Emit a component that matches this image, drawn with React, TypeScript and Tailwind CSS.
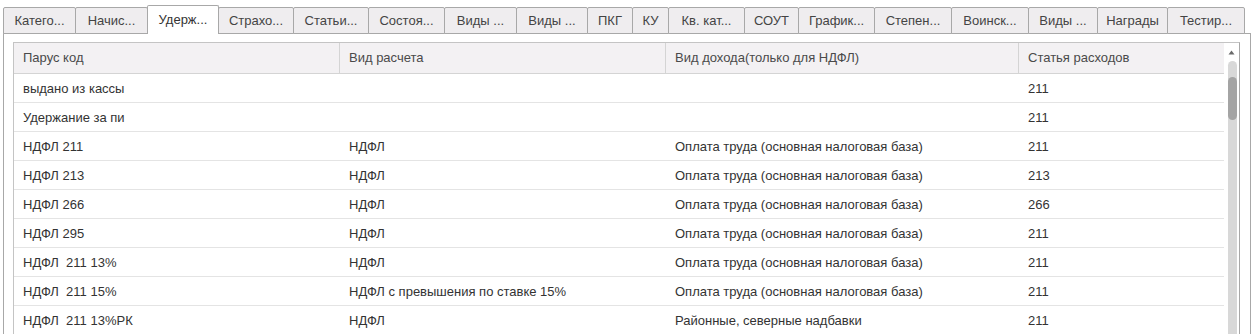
import React from "react";

const tabs: { label: string; w: number; active?: boolean }[] = [
  { label: "Катего...", w: 72 },
  { label: "Начис...", w: 72 },
  { label: "Удерж...", w: 71, active: true },
  { label: "Страхо...", w: 75 },
  { label: "Статьи...", w: 75 },
  { label: "Состоя...", w: 76 },
  { label: "Виды ...", w: 72 },
  { label: "Виды ...", w: 71 },
  { label: "ПКГ", w: 45 },
  { label: "КУ", w: 36 },
  { label: "Кв. кат...", w: 76 },
  { label: "СОУТ", w: 54 },
  { label: "График...", w: 76 },
  { label: "Степен...", w: 77 },
  { label: "Воинск...", w: 77 },
  { label: "Виды ...", w: 69 },
  { label: "Награды", w: 70 },
  { label: "Тестир...", w: 77 },
];

const OT = "Оплата труда (основная налоговая база)";
const rows: [string, string, string, string][] = [
  ["выдано из кассы", "", "", "211"],
  ["Удержание за пи", "", "", "211"],
  ["НДФЛ 211", "НДФЛ", OT, "211"],
  ["НДФЛ 213", "НДФЛ", OT, "213"],
  ["НДФЛ 266", "НДФЛ", OT, "266"],
  ["НДФЛ 295", "НДФЛ", OT, "211"],
  ["НДФЛ  211 13%", "НДФЛ", OT, "211"],
  ["НДФЛ  211 15%", "НДФЛ с превышения по ставке 15%", OT, "211"],
  ["НДФЛ  211 13%РК", "НДФЛ", "Районные, северные надбавки", "211"],
];

const colW = ["w-[326px]", "w-[326px]", "w-[353px]", "w-[205px]"];

export default function App() {
  return (
    <div className="w-[1255px] h-[334px] overflow-hidden bg-white font-['Liberation_Sans',Arial,sans-serif] text-[13px] text-[#333333]">
      <div className="flex items-end pl-[3px] h-[34px] relative z-10">
        {tabs.map((t, i) =>
          t.active ? (
            <div
              key={i}
              style={{ width: t.w + 1 }}
              className="h-[29px] -mr-px flex items-center justify-center bg-white border border-b-0 border-[#a8a8a8] rounded-t-[2px] text-[#333] pb-[1px] relative z-10"
            >
              {t.label}
            </div>
          ) : (
            <div
              key={i}
              style={{ width: t.w + 1 }}
              className="h-[27px] -mr-px flex items-center justify-center bg-[#efedef] border border-[#a8a8a8] rounded-t-[2px] text-[#444]"
            >
              {t.label}
            </div>
          )
        )}
      </div>
      <div className="ml-[3px] w-[1248px] h-[310px] -mt-px border border-[#a8a8a8] pl-[9px] pt-[8px] pr-[10px]">
        <div className="flex h-[300px] border border-[#c4c4c4] border-r-[#a8a8a8]">
          <div className="flex flex-col w-[1210px]">
            <div className="flex h-[31px] bg-[#f3f1f3] border-b border-[#d4d4d4] text-[#4a4a4a]">
              {["Парус код", "Вид расчета", "Вид дохода(только для НДФЛ)", "Статья расходов"].map((h, i) => (
                <div
                  key={i}
                  className={`${colW[i]} ${i < 3 ? "border-r border-[#d4d4d4]" : ""} flex items-center pl-[9px] whitespace-pre`}
                >
                  {h}
                </div>
              ))}
            </div>
            {rows.map((r, ri) => (
              <div key={ri} className="flex h-[29px] border-b border-[#e4e4e4]">
                {r.map((c, ci) => (
                  <div key={ci} className={`${colW[ci]} flex items-center pl-[9px] pt-[1px] whitespace-pre`}>
                    {c}
                  </div>
                ))}
              </div>
            ))}
          </div>
          <div className="flex-1 flex flex-col items-center pt-[7px]">
            <svg width="7" height="5" viewBox="0 0 7 5" className="mb-[6px]">
              <path d="M3.5 0.5 L6.5 4.5 L0.5 4.5 Z" fill="#6a6a6a" />
            </svg>
            <div className="w-[9px] flex-1 bg-[#d8d8d8] rounded-t-[5px] pt-[16px] ml-[1px]">
              <div className="w-[9px] h-[43px] bg-[#a4a4a4] rounded-[5px]" />
            </div>
          </div>
        </div>
      </div>
    </div>
  );
}
